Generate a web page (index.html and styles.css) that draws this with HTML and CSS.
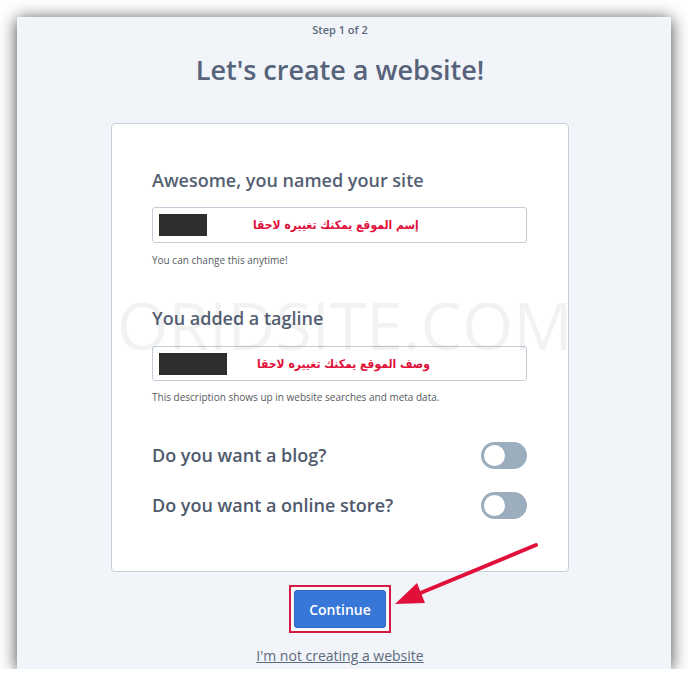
FILE: index.html
```html
<!DOCTYPE html>
<html>
<head>
<meta charset="utf-8">
<link rel="stylesheet" href="styles.css">
</head>
<body>
<div class="frame">
  <div class="column">
    <div class="step">Step 1 of 2</div>
    <h1 class="title">Let's create a website!</h1>
    <div class="card">
      <h2 class="label">Awesome, you named your site</h2>
      <div class="field">
        <span class="redact redact-short"></span>
        <span class="ar ar-1" dir="rtl">إسم الموقع يمكنك تغييره لاحقا</span>
      </div>
      <p class="help help-1">You can change this anytime!</p>

      <h2 class="label label-2">You added a tagline</h2>
      <div class="field field-2">
        <span class="redact redact-long"></span>
        <span class="ar ar-2" dir="rtl">وصف الموقع يمكنك تغييره لاحقا</span>
      </div>
      <p class="help help-2">This description shows up in website searches and meta data.</p>

      <div class="row row-1">
        <span class="row-text">Do you want a blog?</span>
        <span class="toggle"></span>
      </div>
      <div class="row row-2">
        <span class="row-text">Do you want a online store?</span>
        <span class="toggle"></span>
      </div>
    </div>
    <div class="highlight">
      <button class="btn">Continue</button>
    </div>
    <a class="skip" href="#">I'm not creating a website</a>
  </div>
  <div class="watermark">ORIDSITE.COM</div>
  <svg class="arrow" viewBox="17 17 654 652" width="654" height="652">
    <line x1="536" y1="545" x2="418" y2="594" stroke="#e0103a" stroke-width="4" stroke-linecap="round"/>
    <polygon points="395,604 425,603 417,583" fill="#e0103a"/>
  </svg>
</div>
</body>
</html>
```

FILE: styles.css
```css
* { box-sizing: border-box; }

html, body {
  margin: 0;
  padding: 0;
  background: #ffffff;
}

body {
  font-family: "Open Sans", "Liberation Sans", sans-serif;
  color: #4d5a6e;
}

.frame {
  position: relative;
  margin: 17px 0 0 17px;
  width: 654px;
  height: 652px;
  background: #f1f4f8;
  box-shadow: 0 2px 16px rgba(0, 0, 0, 0.75);
  overflow: hidden;
}

.column {
  display: flex;
  flex-direction: column;
  align-items: center;
  padding-right: 8px;
}

.step {
  margin-top: 5px;
  font-size: 11px;
  line-height: 16px;
  font-weight: 600;
  color: #5d6a7d;
}

.title {
  margin: 14px 0 0;
  font-size: 27px;
  line-height: 36px;
  font-weight: 600;
  color: #56637a;
}

.card {
  margin-top: 35px;
  width: 458px;
  height: 449px;
  background: #ffffff;
  border: 1px solid #c6d1dc;
  border-radius: 4px;
  padding: 44px 41px 0 40px;
}

.label {
  margin: 0;
  font-size: 18px;
  line-height: 24px;
  font-weight: 600;
  color: #545f72;
}

.label-2 { margin-top: 39px; }

.field {
  margin-top: 15px;
  height: 36px;
  border: 1px solid #c3cdd8;
  border-radius: 3px;
  background: #fff;
  display: flex;
  align-items: center;
  padding-left: 6px;
}

.field-2 {
  margin-top: 16px;
  height: 35px;
}

.redact {
  display: block;
  height: 22px;
  background: #2e2e2e;
}
.redact-short { width: 48px; }
.redact-long { width: 68px; }

.ar {
  font-family: "DejaVu Sans Condensed", "DejaVu Sans", sans-serif;
  font-weight: bold;
  font-size: 12px;
  color: #e0103a;
  line-height: 18px;
}
.ar-1 { margin-left: 46px; }
.ar-2 { margin-left: 30px; }

.help {
  margin: 10px 0 0;
  font-size: 10px;
  line-height: 14px;
  color: #555a60;
}
.help-2 { margin-top: 9px; }

.row {
  display: flex;
  align-items: center;
  justify-content: space-between;
  height: 28px;
}
.row-1 { margin-top: 37px; }
.row-2 { margin-top: 22px; }

.row-text {
  font-size: 18px;
  line-height: 24px;
  font-weight: 600;
  color: #4f5a6d;
}

.toggle {
  position: relative;
  display: block;
  width: 46px;
  height: 27px;
  border-radius: 14px;
  background: #9cadbd;
}
.toggle::after {
  content: "";
  position: absolute;
  left: 3px;
  top: 3px;
  width: 21px;
  height: 21px;
  border-radius: 50%;
  background: #ffffff;
}

.highlight {
  margin-top: 13px;
  width: 102px;
  height: 48px;
  border: 2px solid #d81a42;
  padding: 3px;
  background: #f7f9fb;
  display: flex;
}

.btn {
  width: 100%;
  height: 100%;
  border: 1px solid #2a66c2;
  border-radius: 3px;
  background: #3677d8;
  color: #ffffff;
  font-family: "Open Sans", "Liberation Sans", sans-serif;
  font-size: 14px;
  font-weight: 600;
  padding: 0;
}

.skip {
  margin-top: 14px;
  font-size: 14px;
  line-height: 18px;
  color: #5d6a7d;
  text-decoration: underline;
}

.watermark {
  position: absolute;
  left: 100px;
  top: 274px;
  font-size: 66px;
  line-height: 1;
  font-weight: 400;
  color: rgba(0, 0, 0, 0.05);
  pointer-events: none;
  white-space: nowrap;
}

.arrow {
  position: absolute;
  left: 0;
  top: 0;
  pointer-events: none;
}
```
